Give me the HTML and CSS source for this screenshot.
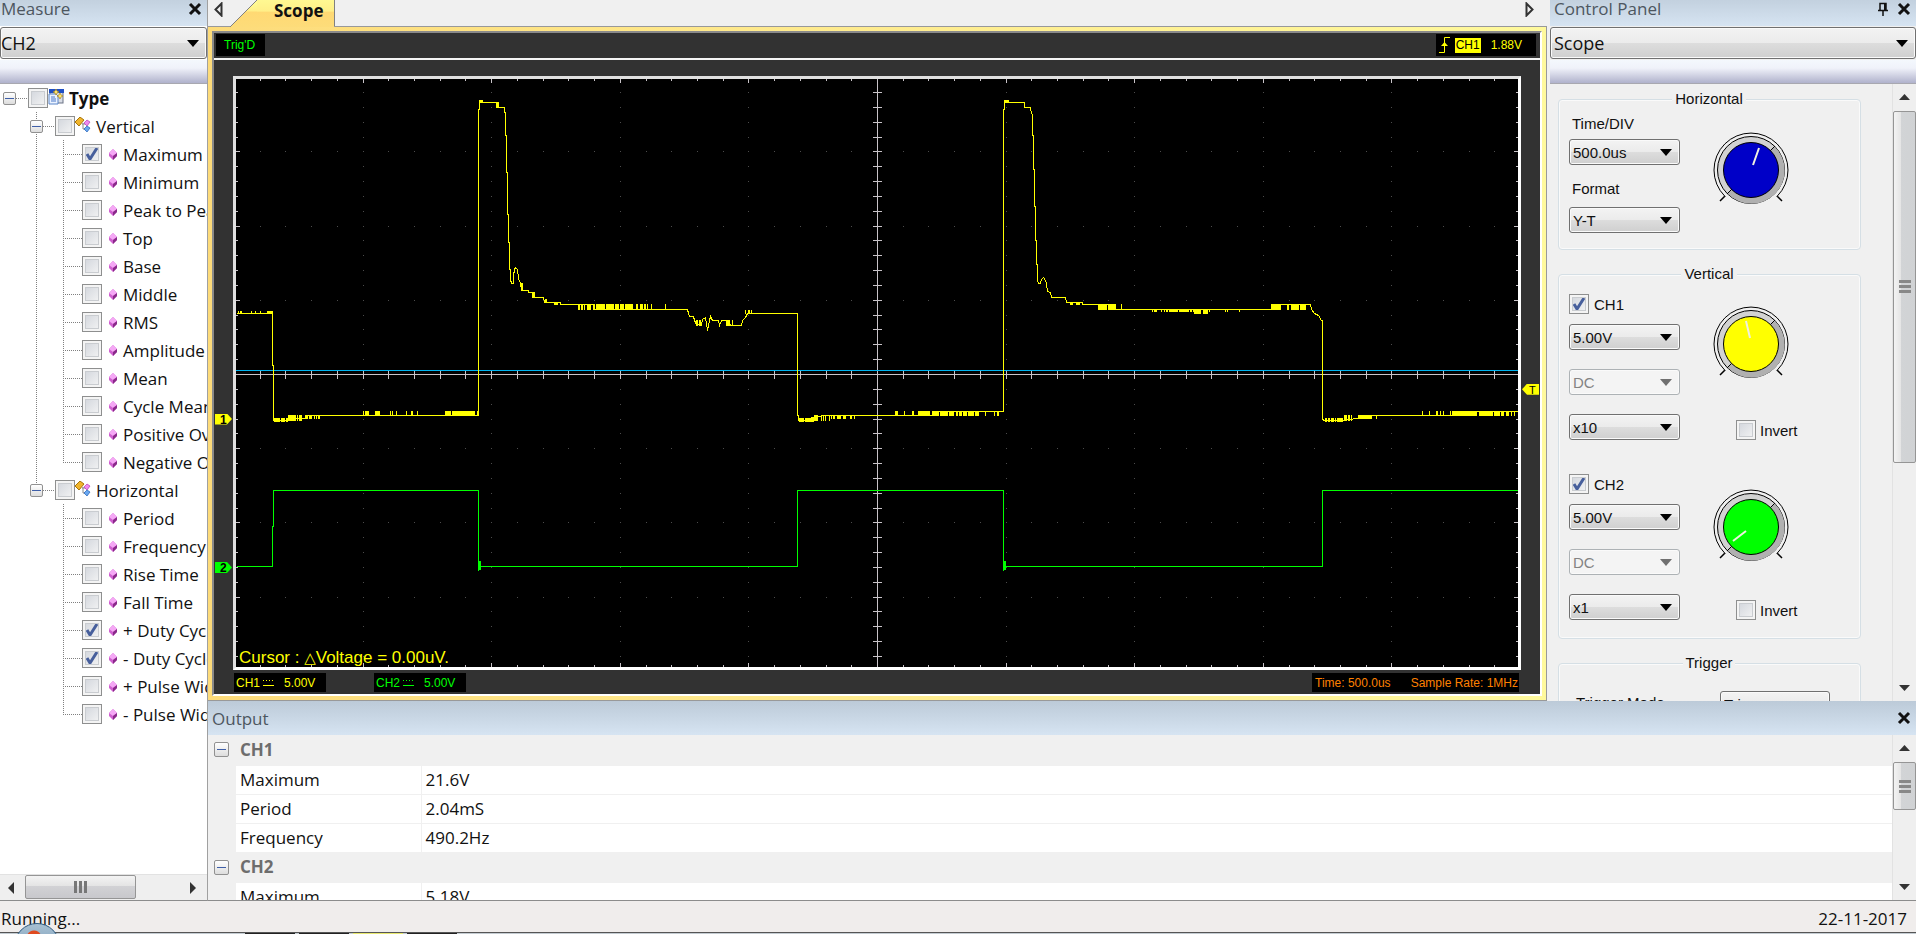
FILE: index.html
```
<!DOCTYPE html>
<html lang="en">
<head>
  <meta charset="UTF-8" />
  <meta name="viewport" content="width=device-width, initial-scale=1.0"/>
  <title>Scope</title>
  <link rel="stylesheet" href="styles.css">
</head>
<body>
  <div class="app">

    <!-- Measure panel -->
    <aside class="measure">
      <div class="panel-title cut">
        <h2>Measure</h2>
        <button class="icon-btn" aria-label="Close Measure"><svg width="14" height="14" viewBox="0 0 14 14"><path d="M2 2L12 12M12 2L2 12" class="cross"/></svg></button>
      </div>
      <select class="combo wide" aria-label="Measure channel">
        <option>CH1</option>
        <option selected>CH2</option>
      </select>
      <div class="strip"></div>

      <div class="tree">
        <div class="row root">
          <button class="expander" aria-label="Collapse Type"></button>
          <span class="dots"></span>
          <input type="checkbox" id="type">
          <svg class="tree-icon" width="16" height="16" viewBox="0 0 16 16">
            <rect x="2" y="1" width="13" height="13" fill="#d9dde6" stroke="#6b7385"/>
            <rect x="1" y="0" width="15" height="4" fill="#1f4fc4"/>
            <path d="M1 5h7l2 2v8H1z" fill="#eaf2ff" stroke="#5b86c9"/>
            <path d="M3 8h4M3 10h5M3 12h5" stroke="#4a78c8"/>
            <path d="M8 0l1 2 2 1-2 1-1 2-1-2-2-1 2-1zM12 4l1 2 2 1-2 1-1 2-1-2-2-1 2-1z" fill="#ffe66a" stroke="#a57a10" stroke-width=".6"/>
          </svg>
          <label for="type" class="bold">Type</label>
        </div>
        <ul class="groups" id="tree"></ul>
      </div>

      <div class="scroll-x">
        <button aria-label="Scroll left"><svg width="8" height="12" viewBox="0 0 8 12"><path d="M7 0v12L1 6z" fill="#333"/></svg></button>
        <div class="thumb"><i></i><i></i><i></i></div>
        <button aria-label="Scroll right"><svg width="8" height="12" viewBox="0 0 8 12"><path d="M1 0v12L7 6z" fill="#333"/></svg></button>
      </div>
    </aside>

    <!-- Scope -->
    <main class="scope">
      <div class="tabs">
        <button class="icon-btn" aria-label="Previous tab"><svg width="9" height="15" viewBox="0 0 9 15"><path d="M7.500 1.500v12L1.500 7.500z" class="hollow"/></svg></button>
        <button class="tab">
          <svg width="27" height="35" viewBox="0 0 27 35">
            <defs>
              <linearGradient id="tabFill" x1="0" y1="0" x2="0" y2="1">
                <stop offset="0" stop-color="#ffff99"/>
                <stop offset=".4" stop-color="#ffef88"/>
                <stop offset=".45" stop-color="#ffd973"/>
                <stop offset="1" stop-color="#fddc7a"/>
              </linearGradient>
            </defs>
            <path d="M0 35L27 8V35z" fill="url(#tabFill)"/>
            <path d="M0 35L27 8" stroke="#808080"/>
          </svg>
          <span>Scope</span>
        </button>
        <button class="icon-btn next" aria-label="Next tab"><svg width="9" height="15" viewBox="0 0 9 15"><path d="M1.500 1.500v12L7.500 7.500z" class="hollow"/></svg></button>
      </div>

      <div class="frame">
        <div class="screen">
          <div class="screen-top">
            <span class="chip trigd">Trig'D</span>
            <span class="chip level">
              <svg width="12" height="18" viewBox="0 0 12 18"><path d="M0 16.500H5.500V1.500H11" fill="none" stroke="#ff0"/><path d="M5.500 6L9 10H2z" fill="#ff0"/></svg>
              <b>CH1</b>
              <span>1.88V</span>
            </span>
          </div>

          <div class="plot-area">
            <div class="plot">
              <svg id="plot" viewBox="0 0 1282 588" preserveAspectRatio="none"></svg>
              <div class="cursor-text">Cursor : <span class="delta">△</span>Voltage = 0.00uV.</div>
            </div>
            <span class="marker ch1">1</span>
            <span class="marker ch2">2</span>
            <span class="marker trig">T</span>
          </div>

          <div class="screen-bottom">
            <span class="chip ch yellow">CH1 <svg width="11" height="8" viewBox="0 0 11 8"><path d="M0 .5h11" stroke-dasharray="1 2"/><path d="M0 5.500h11"/></svg><span>5.00V</span></span>
            <span class="chip ch green">CH2 <svg width="11" height="8" viewBox="0 0 11 8"><path d="M0 .5h11" stroke-dasharray="1 2"/><path d="M0 5.500h11"/></svg><span>5.00V</span></span>
            <span class="chip rate"><span>Time: 500.0us</span><span>Sample Rate: 1MHz</span></span>
          </div>
        </div>
      </div>
    </main>

    <!-- Control panel -->
    <aside class="control">
      <div class="panel-title cut">
        <h2>Control Panel</h2>
        <button class="icon-btn" aria-label="Pin"><svg width="12" height="14" viewBox="0 0 12 14"><path d="M3 8V1.500h6V8M1 8.500h10M6 9v5" fill="none" stroke="#111" stroke-width="1.500"/><path d="M7 1h2v7H7z" fill="#111"/></svg></button>
        <button class="icon-btn" aria-label="Close Control Panel"><svg width="14" height="14" viewBox="0 0 14 14"><path d="M2 2L12 12M12 2L2 12" class="cross"/></svg></button>
      </div>
      <select class="combo wide" aria-label="Panel">
        <option>Scope</option>
      </select>
      <div class="strip"></div>

      <div class="control-body">
        <div class="groups-col">
          <fieldset>
            <legend>Horizontal</legend>
            <div class="pair">
              <div class="fields timebase">
                <label for="timediv">Time/DIV</label>
                <select class="combo" id="timediv"><option>500.0us</option></select>
                <label for="format">Format</label>
                <select class="combo" id="format"><option>Y-T</option></select>
              </div>
              <div class="side top-pad">
                <svg class="knob" width="80" height="80" viewBox="-40 -40 80 80">
                  <use href="#knobRing"/>
                  <circle r="27.500" fill="#0000c8" stroke="#000"/>
                  <path d="M2 -5L8 -22" class="pointer"/>
                </svg>
              </div>
            </div>
          </fieldset>

          <fieldset>
            <legend>Vertical</legend>
            <div class="pair channel">
              <div class="fields">
                <span class="check"><input type="checkbox" id="ch1on" checked><label for="ch1on">CH1</label></span>
                <select class="combo" aria-label="CH1 volts per division"><option>5.00V</option></select>
                <select class="combo" aria-label="CH1 coupling" disabled><option>DC</option></select>
                <select class="combo" aria-label="CH1 probe"><option>x10</option></select>
              </div>
              <div class="side">
                <svg class="knob" width="80" height="80" viewBox="-40 -40 80 80">
                  <use href="#knobRing"/>
                  <circle r="27.500" fill="#ff0" stroke="#000"/>
                  <path d="M-5 -23L-1 -6" class="pointer"/>
                </svg>
                <span class="check invert"><input type="checkbox" id="inv1"><label for="inv1">Invert</label></span>
              </div>
            </div>
            <div class="pair channel second">
              <div class="fields">
                <span class="check"><input type="checkbox" id="ch2on" checked><label for="ch2on">CH2</label></span>
                <select class="combo" aria-label="CH2 volts per division"><option>5.00V</option></select>
                <select class="combo" aria-label="CH2 coupling" disabled><option>DC</option></select>
                <select class="combo" aria-label="CH2 probe"><option>x1</option></select>
              </div>
              <div class="side">
                <svg class="knob" width="80" height="80" viewBox="-40 -40 80 80">
                  <use href="#knobRing"/>
                  <circle r="27.500" fill="#0f0" stroke="#000"/>
                  <path d="M-18 14L-5 4" class="pointer"/>
                </svg>
                <span class="check invert"><input type="checkbox" id="inv2"><label for="inv2">Invert</label></span>
              </div>
            </div>
          </fieldset>

          <fieldset>
            <legend>Trigger</legend>
            <div class="trigger-row">
              <label for="trigmode">Trigger Mode</label>
              <select class="combo" id="trigmode"><option>Trigger</option></select>
            </div>
          </fieldset>
        </div>

        <div class="scroll-y">
          <button aria-label="Scroll up"><svg width="11" height="7" viewBox="0 0 11 7"><path d="M0 6h11L5.500 0z" fill="#333"/></svg></button>
          <div class="thumb tall"><i></i><i></i><i></i></div>
          <button aria-label="Scroll down"><svg width="11" height="7" viewBox="0 0 11 7"><path d="M0 1h11L5.500 7z" fill="#333"/></svg></button>
        </div>
      </div>
    </aside>

    <!-- Output -->
    <section class="output">
      <div class="panel-title">
        <h2>Output</h2>
        <button class="icon-btn" aria-label="Close Output"><svg width="14" height="14" viewBox="0 0 14 14"><path d="M2 2L12 12M12 2L2 12" class="cross"/></svg></button>
      </div>
      <div class="output-body">
        <div class="table-wrap">
          <table>
            <colgroup>
              <col class="col-gutter">
              <col class="col-name">
              <col>
            </colgroup>
            <tbody>
              <tr class="head"><td class="gutter"><button class="expander big" aria-label="Collapse CH1"></button></td><th colspan="2">CH1</th></tr>
              <tr><td class="gutter"></td><td class="name">Maximum</td><td>21.6V</td></tr>
              <tr><td class="gutter"></td><td class="name">Period</td><td>2.04mS</td></tr>
              <tr><td class="gutter"></td><td class="name">Frequency</td><td>490.2Hz</td></tr>
              <tr class="head"><td class="gutter"><button class="expander big" aria-label="Collapse CH2"></button></td><th colspan="2">CH2</th></tr>
              <tr><td class="gutter"></td><td class="name">Maximum</td><td>5.18V</td></tr>
            </tbody>
          </table>
        </div>
        <div class="scroll-y">
          <button aria-label="Scroll up"><svg width="11" height="7" viewBox="0 0 11 7"><path d="M0 6h11L5.500 0z" fill="#333"/></svg></button>
          <div class="thumb short"><i></i><i></i><i></i></div>
          <button aria-label="Scroll down"><svg width="11" height="7" viewBox="0 0 11 7"><path d="M0 1h11L5.500 7z" fill="#333"/></svg></button>
        </div>
      </div>
    </section>

    <footer class="status">
      <span>Running...</span>
      <span>22-11-2017</span>
    </footer>
    <div class="taskbar">
      <span class="orb"></span>
      <i></i><i></i><i class="active"></i><i></i>
    </div>
  </div>

  <!-- shared shapes -->
  <svg width="0" height="0" class="defs">
    <defs>
      <g id="knobRing">
        <path d="M-22 22L-31 31M22 22L31 31" stroke="#000" stroke-width="1.500"/>
        <path d="M-26.200 26.200A37 37 0 1 1 26.200 26.200" fill="#f0f0f0" stroke="#000"/>
        <circle r="33.500" fill="#d2d2d2" stroke="#000"/>
        <path d="M-23 24A33 33 0 0 0 24 -23L19 -20L-20 19z" fill="#b0b0b0"/>
        <path d="M-24 24L-18 18M24 -24L18 -18" stroke="#000"/>
      </g>
      <g id="groupIcon">
        <path d="M8 6v6h3M7 7h5" fill="none" stroke="#8a8a8a"/>
        <path d="M5 0l4 3-5 6-4-4z" fill="#f0b52c" stroke="#a87408"/>
        <path d="M12 3l3 2-3 4-3-3z" fill="#f08af0" stroke="#b03cb0" stroke-width=".7"/>
        <path d="M12 9l3 2-3 4-3-3z" fill="#6aa8f0" stroke="#1f5fb8" stroke-width=".7"/>
      </g>
      <g id="leafIcon">
        <path d="M4 0l4 4v3l-4 4-4-4V4z" fill="#d060d0"/>
        <path d="M4 0l4 4-4 3-4-3z" fill="#f5a8f5"/>
        <path d="M4 7l4-3v3l-4 4z" fill="#8a2a8a"/>
      </g>
    </defs>
  </svg>

  <script>
    // Measurement tree
    const groups = {
      Vertical: ["*Maximum", "Minimum", "Peak to Peak", "Top", "Base", "Middle", "RMS", "Amplitude", "Mean",
        "Cycle Mean", "Positive Overshoot", "Negative Overshoot"],
      Horizontal: ["Period", "Frequency", "Rise Time", "Fall Time", "*+ Duty Cycle", "*- Duty Cycle",
        "+ Pulse Width", "- Pulse Width"]
    };
    const tree = document.getElementById("tree");

    Object.keys(groups).forEach(name => {
      const leaves = groups[name].map((text, i) => {
        const on = text[0] === "*";
        const id = name + i;
        return `<li><div class="row leaf"><span class="dots"></span><input type="checkbox" id="${id}"${on ? " checked" : ""}>` +
          `<svg class="leaf-icon" width="8" height="11"><use href="#leafIcon"/></svg><label for="${id}">${on ? text.slice(1) : text}</label></div></li>`;
      }).join("");
      tree.innerHTML += `<li><div class="row group"><button class="expander" aria-label="Collapse ${name}"></button><span class="dots"></span>` +
        `<input type="checkbox" id="${name}"><svg class="tree-icon" width="16" height="16"><use href="#groupIcon"/></svg>` +
        `<label for="${name}">${name}</label></div><ul class="leaves">${leaves}</ul></li>`;
    });

    // Plot
    const W = 1282, H = 588, CX = 641, CY = 295, DX = 25.72, DY = 14.84;
    let dots = "", ticks = "";

    for (let i = -24; i <= 24; i++) {
      const x = Math.round(CX + i * DX);
      const len = i % 5 === 0 ? 4 : 2;
      ticks += `M${x} 0h1v${len}h-1zM${x} ${H - len}h1v${len}h-1zM${x} ${CY - 4}h1v9h-1z`;
      for (let j = -15; j <= 15; j += 5) dots += `M${x} ${Math.round(CY + j * DY)}h1v1h-1z`;
    }
    for (let j = -19; j <= 19; j++) {
      const y = Math.round(CY + j * DY);
      const len = j % 5 === 0 ? 4 : 2;
      ticks += `M0 ${y}h${len}v1h-${len}zM${W - len} ${y}h${len}v1h-${len}zM${CX - 4} ${y}h9v1h-9z`;
      for (let i = -20; i <= 20; i += 5) dots += `M${Math.round(CX + i * DX)} ${y}h1v1h-1z`;
    }
    ticks += `M0 ${CY}h${W}v1h-${W}zM${CX} 0h1v${H}h-1z`;

    // CH1 trace, [x, y] in plot pixels
    const ch1 = [
      [0,234],[36,234],[36,286],[37,286],[37,341],[50,341],[50,339],[70,339],[70,336],[242,336],[242,30],[243,30],[243,23],
      [260,23],[260,28],[268,28],[268,33],[269,33],[269,56],[270,56],[270,93],[271,93],[271,135],[272,135],[272,163],
      [273,163],[273,190],[274,190],[274,202],[275,202],[275,204],[277,204],[277,193],[278,193],[278,190],[279,188],[281,190],
      [282,199],[284,204],[285,211],[292,211],[292,213],[297,213],[297,218],[307,218],[308,223],[324,223],[324,225],[358,225],
      [358,230],[451,230],[452,234],[453,237],[457,237],[458,241],[460,245],[465,246],[466,240],[469,238],[471,251],[473,241],
      [474,237],[476,241],[482,241],[483,246],[485,241],[492,241],[494,246],[505,246],[506,241],[509,238],[511,234],[561,234],
      [561,336],[562,336],[562,341],[572,341],[572,339],[587,336],[640,336],[700,336],[700,332],[767,332],[767,30],[768,30],
      [768,23],[788,23],[788,28],[794,28],[795,34],[796,35],[796,56],[797,56],[797,90],[798,90],[798,127],[799,127],[799,161],
      [800,161],[800,185],[801,185],[801,201],[802,204],[804,204],[805,200],[807,198],[808,199],[810,204],[811,212],[814,213],
      [815,218],[829,218],[830,223],[846,223],[846,225],[875,225],[875,230],[1035,230],[1035,225],[1074,225],[1075,230],
      [1078,234],[1082,236],[1085,241],[1086,241],[1086,339],[1087,341],[1105,341],[1120,339],[1130,336],[1240,336],
      [1240,332],[1282,332]
    ];
    // noise bursts: [x from, x to, top, bottom, density]
    const noise = [
      [2,30,232,234,.3],[31,37,232,234,1],[243,248,21,23,.5],[260,263,23,28,1],
      [38,52,339,342,.8],[52,66,336,341,.7],[66,84,336,339,.4],[126,145,332,336,.6],[145,208,332,336,.12],
      [208,242,332,336,.85],[285,287,204,211,1],[296,299,213,218,1],[308,311,220,223,.6],[318,325,223,225,.5],
      [342,360,225,230,.5],[360,388,225,230,.92],[389,412,225,230,.8],[412,432,225,230,.2],
      [458,466,241,246,.7],[490,497,241,246,.5],[509,516,231,234,.4],
      [562,578,339,342,.8],[578,594,336,341,.6],[592,612,336,339,.8],[612,622,336,339,.2],
      [659,682,332,336,.4],[682,710,332,336,.8],[710,738,332,336,.85],[738,768,332,336,.3],[768,773,21,23,.7],
      [834,844,223,225,.4],[862,880,225,230,.8],[880,890,225,230,.4],[915,930,230,232,.5],[930,958,230,232,.9],
      [958,972,230,234,.7],[972,1005,230,232,.1],[1035,1045,225,230,1],[1048,1058,225,230,.5],[1058,1070,225,230,.95],
      [1088,1108,339,342,.6],[1108,1122,336,341,.6],[1122,1136,336,339,.9],[1136,1152,336,339,.2],
      [1184,1216,332,336,.3],[1216,1228,332,336,.7],[1228,1240,332,336,1],[1240,1268,332,336,.85],[1268,1282,332,336,.3]
    ];
    const ch2 = [[0,487],[36,487],[36,447],[37,447],[37,411],[242,411],[242,491],[242,487],[561,487],[561,411],
      [767,411],[767,491],[767,487],[1086,487],[1086,411],[1282,411]];

    let seed = 7;
    function random() {
      seed = (seed * 16807) % 2147483647;
      return seed / 2147483647;
    }
    let spikes = "";
    noise.forEach(([x0, x1, top, bottom, density]) => {
      for (let x = x0; x < x1; x++) {
        if (random() < density) spikes += `M${x} ${top}h1v${bottom - top + 1}h-1z`;
      }
    });

    const line = points => points.map(p => (p[0] + 0.5) + "," + (p[1] + 0.5)).join(" ");
    document.getElementById("plot").innerHTML =
      `<path d="${dots}" fill="#4c4c4c"/><path d="${ticks}" fill="#c8c3c8"/>` +
      `<path d="M0 291h${W}v1h-${W}z" fill="#00b4f0"/>` +
      `<polyline points="${line(ch2)}" class="trace green"/><path d="M242 482h3v9h-3zM767 482h3v9h-3z" fill="#0f0"/>` +
      `<polyline points="${line(ch1)}" class="trace yellow"/><path d="${spikes}" fill="#ff0"/>`;
  </script>
</body>
</html>
```
FILE: styles.css
```
* {
  box-sizing: border-box;
}
body {
  margin: 0;
  font-family: "Open Sans", "Noto Sans", sans-serif;
  font-size: 17px;
  color: #111;
  background: #f0f0f0;
}
button {
  padding: 0;
  border: none;
  background: none;
  font: inherit;
  color: inherit;
}
h2 {
  margin: 0;
  font-size: 17px;
  font-weight: normal;
  flex: 1;
}
svg {
  display: block;
}
.defs {
  position: absolute;
}
.app {
  display: grid;
  grid-template-columns: 208px minmax(0, 1fr) 369px;
  grid-template-rows: minmax(0, 1fr) 200px 31px 2px;
  height: 100vh;
  overflow: hidden;
}

/* panels */
.panel-title {
  display: flex;
  align-items: center;
  gap: 8px;
  height: 34px;
  flex: none;
  padding: 0 5px 0 4px;
  color: #4d565f;
  background: linear-gradient(#bccad8, #d6e4f2);
}
.panel-title.cut {
  height: 35px;
  margin-top: -9px;
}
.measure .panel-title {
  padding-left: 1px;
}
.icon-btn {
  display: flex;
  align-items: center;
}
.cross {
  stroke: #111;
  stroke-width: 3;
}
.hollow {
  fill: none;
  stroke: #333;
  stroke-width: 2;
}
.strip {
  height: 24px;
  flex: none;
  margin-top: 1px;
  background: linear-gradient(#f4f8fd, #f0f2fa 35%, #b0b2cc);
  border-bottom: 1px solid #a8a8b0;
}
.combo {
  appearance: none;
  display: block;
  width: 100%;
  height: 26px;
  padding: 0 24px 0 3px;
  border: 1px solid #707070;
  border-radius: 3px;
  font: 15px "Liberation Sans", Arial, sans-serif;
  color: #111;
  background:
    url("data:image/svg+xml,%3Csvg xmlns='http://www.w3.org/2000/svg' width='12' height='7'%3E%3Cpath d='M0 0h12L6 7z'/%3E%3C/svg%3E") right 7px center no-repeat,
    linear-gradient(#f3f3f3, #ebebeb 50%, #dddddd 50%, #cfcfcf);
  box-shadow: inset 0 0 0 1px #fafafa;
}
.combo:disabled {
  opacity: 1;
  color: #838383;
  border-color: #adb2b5;
  background:
    url("data:image/svg+xml,%3Csvg xmlns='http://www.w3.org/2000/svg' width='12' height='7'%3E%3Cpath d='M0 0h12L6 7z' fill='%23707070'/%3E%3C/svg%3E") right 7px center no-repeat,
    #f4f4f4;
}
.combo.wide {
  flex: none;
  height: 32px;
  margin-top: 1px;
  font: 18px "Open Sans", "Noto Sans", sans-serif;
}
.measure .combo {
  padding-left: 0;
}
input[type="checkbox"] {
  appearance: none;
  flex: none;
  width: 20px;
  height: 20px;
  margin: 0;
  border: 1px solid #8e8f8f;
  background: linear-gradient(135deg, #cfd3da, #f6f6f6);
  box-shadow: inset 0 0 0 2px #f4f4f4, inset 0 0 0 3px #c9ccd0;
}
input[type="checkbox"]:checked {
  background:
    url("data:image/svg+xml,%3Csvg xmlns='http://www.w3.org/2000/svg' width='14' height='14'%3E%3Cpath d='M2 7l3 5L12 1' fill='none' stroke='%23475f9c' stroke-width='3'/%3E%3C/svg%3E") center no-repeat,
    linear-gradient(135deg, #cfd3da, #f6f6f6);
}
.expander {
  flex: none;
  width: 13px;
  height: 13px;
  border: 1px solid #919191;
  border-radius: 2px;
  background: linear-gradient(#3f5fa8, #3f5fa8) center / 9px 1px no-repeat, linear-gradient(#fff, #ddd);
}
.expander.big {
  display: block;
  width: 15px;
  height: 15px;
}

/* scrollbars */
.scroll-x,
.scroll-y {
  display: flex;
  flex: none;
  background: #efefef;
}
.scroll-x {
  height: 26px;
  border-top: 1px solid #e2e2e2;
}
.scroll-y {
  flex-direction: column;
  width: 24px;
  border-left: 1px solid #e2e2e2;
}
.scroll-x button,
.scroll-y button {
  display: flex;
  align-items: center;
  justify-content: center;
  flex: none;
}
.scroll-x button {
  width: 25px;
  padding-right: 4px;
}
.scroll-y button {
  height: 27px;
}
.scroll-x button:last-child {
  margin-left: auto;
}
.scroll-y button:last-child {
  margin-top: auto;
}
.thumb {
  display: flex;
  align-items: center;
  justify-content: center;
  gap: 2px;
  border: 1px solid #959595;
  border-radius: 2px;
}
.scroll-x .thumb {
  width: 111px;
  margin-bottom: 1px;
  background: linear-gradient(#f3f3f3, #e4e4e4 45%, #d2d2d5 45%, #c8c8cc);
}
.scroll-y .thumb {
  flex-direction: column;
  background: linear-gradient(to right, #f3f3f3, #e4e4e4 35%, #d2d4d6 35%, #d0d2d4);
}
.scroll-x .thumb i {
  width: 3px;
  height: 12px;
  background: #777;
}
.scroll-y .thumb i {
  width: 12px;
  height: 3px;
  background: #888;
}
.thumb.tall {
  height: 57%;
}
.thumb.short {
  height: 48px;
}

/* measure */
.measure {
  grid-row: 1 / 3;
  display: flex;
  flex-direction: column;
  overflow: hidden;
  background: #fff;
  border-right: 1px solid #a0a0a0;
  border-bottom: 1px solid #8c8c8c;
}
.tree {
  flex: 1;
  overflow: hidden;
}
.tree ul {
  margin: 0;
  padding: 0;
  list-style: none;
}
.row {
  display: flex;
  align-items: center;
  height: 28px;
  white-space: nowrap;
}
.row.root {
  padding-left: 3px;
}
.row .dots {
  flex: none;
  width: 12px;
  height: 1px;
  background: repeating-linear-gradient(to right, #808080 0 1px, transparent 1px 2px);
}
.row.leaf .dots {
  width: 19px;
}
.tree .groups {
  margin-left: 36px;
}
.tree .leaves {
  margin-left: 27px;
}
.tree li {
  background: repeating-linear-gradient(#808080 0 1px, transparent 1px 2px) left top / 1px 100% no-repeat;
}
.tree li:last-child {
  background-size: 1px 14px;
}
.row.group {
  margin-left: -6px;
}
.tree-icon {
  flex: none;
  margin: 0 5px 2px 0;
}
.leaf-icon {
  flex: none;
  margin: 0 6px 0 7px;
}
.bold {
  font-weight: bold;
}

/* scope */
.scope {
  display: flex;
  flex-direction: column;
  min-width: 0;
}
.tabs {
  display: flex;
  flex: none;
  height: 35px;
  margin-top: -8px;
  padding: 0 13px 0 6px;
  border-bottom: 1px solid #999;
}
.tab {
  display: flex;
  margin-left: 7px;
  border-right: 1px solid #808080;
  font-weight: bold;
}
.tab span {
  height: 35px;
  padding: 0 11px 0 17px;
  line-height: 38px;
  background: linear-gradient(#ffff99, #ffef88 55%, #ffd973 57%, #fddc7a);
}
.next {
  margin-left: auto;
}
.frame {
  display: flex;
  flex: 1;
  min-height: 0;
  padding: 4px;
  background: linear-gradient(to right, #fddb7a, #ffe98c 40%, #fff99c);
  border-right: 1px solid #999;
  border-bottom: 1px solid #999;
}
.screen {
  display: flex;
  flex-direction: column;
  flex: 1;
  min-width: 0;
  border: 2px solid;
  border-color: #8a8a8a #fff #fff #8a8a8a;
  background: #323232;
  font: 12px "Liberation Sans", Arial, sans-serif;
}
.screen-top {
  display: flex;
  justify-content: space-between;
  height: 27px;
  flex: none;
  padding: 1px 4px 2px 2px;
  border-bottom: 2px solid #f4f4f4;
}
.chip {
  display: flex;
  align-items: center;
  background: #000;
}
.trigd {
  padding: 0 10px 0 8px;
  color: #0f0;
}
.level {
  gap: 4px;
  padding: 0 14px 0 3px;
  color: #ff0;
}
.level b {
  padding: 0 1px;
  font-weight: normal;
  line-height: 15px;
  color: #000;
  background: #ff0;
}
.level span {
  margin-left: 6px;
}
.plot-area {
  position: relative;
  display: flex;
  flex: 1;
  min-height: 0;
  margin: 16px 19px 0;
}
.plot {
  position: relative;
  flex: 1;
  background: #000;
  border: 3px solid;
  border-color: #e0e0e0 #fff #fff #e0e0e0;
}
.plot svg {
  width: 100%;
  height: 100%;
  shape-rendering: crispEdges;
}
.trace {
  fill: none;
  stroke-width: 1;
}
.trace.yellow {
  stroke: #ff0;
}
.trace.green {
  stroke: #0f0;
}
.cursor-text {
  position: absolute;
  left: 3px;
  bottom: 0;
  font-size: 17px;
  line-height: 18px;
  color: #ff0;
}
.delta {
  font: 15px "DejaVu Sans", sans-serif;
}
.marker {
  position: absolute;
  width: 17px;
  height: 11px;
  margin-top: -7px;
  line-height: 12px;
  color: #000;
  clip-path: polygon(0 0, 12px 0, 100% 50%, 12px 100%, 0 100%);
}
.marker.ch1,
.marker.ch2 {
  left: -18px;
  padding-left: 5px;
  font-weight: bold;
}
.marker.ch1 {
  top: 58%;
  background: #ff0;
}
.marker.ch2 {
  top: 83%;
  background: #0f0;
}
.marker.trig {
  top: 53%;
  right: -18px;
  padding-left: 7px;
  font-size: 11px;
  background: #ff0;
  clip-path: polygon(0 50%, 5px 0, 100% 0, 100% 100%, 5px 100%);
}
.screen-bottom {
  display: flex;
  flex: none;
  gap: 48px;
  margin: 3px 21px 2px 20px;
}
.ch {
  width: 92px;
  height: 19px;
  padding-left: 2px;
}
.ch svg {
  margin: 2px 10px 0 3px;
  fill: none;
  stroke: currentColor;
}
.ch.yellow {
  color: #ff0;
}
.ch.green {
  color: #0f0;
}
.rate {
  gap: 20px;
  margin-left: auto;
  padding: 0 1px 0 3px;
  color: #ff8000;
}

/* control panel */
.control {
  display: flex;
  flex-direction: column;
  min-height: 0;
  overflow: hidden;
  padding-left: 3px;
  font: 15px "Liberation Sans", Arial, sans-serif;
}
.control .panel-title {
  font-family: "Open Sans", "Noto Sans", sans-serif;
}
.control-body {
  display: flex;
  flex: 1;
  min-height: 0;
}
.groups-col {
  flex: 1;
  overflow: hidden;
  padding: 5px 31px 0 8px;
}
fieldset {
  margin: 0 0 14px;
  padding: 0 11px 0 10px;
  border: 1px solid #d5dfe5;
  border-radius: 4px;
  box-shadow: inset 0 0 0 1px #fafafa;
}
legend {
  margin: 0 auto;
  padding: 0 3px;
  line-height: 20px;
  background: #f0f0f0;
}
.pair {
  display: flex;
}
.fields {
  width: 111px;
}
.timebase {
  padding: 5px 0 16px;
}
.timebase label {
  display: block;
  height: 25px;
  padding-left: 3px;
  line-height: 20px;
}
.timebase .combo + label {
  height: 28px;
  margin-top: 14px;
}
.side {
  padding-left: 31px;
}
.side.top-pad {
  padding-top: 21px;
}
.check {
  display: flex;
  align-items: center;
  gap: 5px;
}
.invert {
  gap: 4px;
  margin: 36px 0 0 25px;
}
.channel {
  padding-top: 10px;
}
.channel .check + .combo {
  margin-top: 10px;
}
.channel .combo + .combo {
  margin-top: 19px;
}
.channel .side {
  padding-top: 10px;
}
.channel.second {
  padding: 34px 0 18px;
}
.channel.second .side {
  padding-top: 13px;
}
.channel.second .invert {
  margin-top: 33px;
}
.trigger-row {
  display: flex;
  align-items: flex-start;
  justify-content: space-between;
  padding: 18px 19px 18px 7px;
}
.trigger-row label {
  line-height: 24px;
}
.trigger-row .combo {
  width: 110px;
}
.pointer {
  stroke: #f0f0e0;
  stroke-width: 2;
}

/* output */
.output {
  grid-column: 2 / 4;
  display: flex;
  flex-direction: column;
  min-width: 0;
  overflow: hidden;
  border-bottom: 1px solid #8c8c8c;
}
.output-body {
  display: flex;
  flex: 1;
  min-height: 0;
}
.table-wrap {
  flex: 1;
  overflow: hidden;
}
table {
  width: 100%;
  border-collapse: collapse;
  table-layout: fixed;
  background: #fff;
}
.col-gutter {
  width: 28px;
}
.col-name {
  width: 185px;
}
td,
th {
  height: 29px;
  padding: 0 4px;
  border-bottom: 1px solid #f0f0f0;
  text-align: left;
  line-height: 24px;
}
td.gutter {
  padding: 0 6px;
  background: #f0f0f0;
}
td.name {
  border-right: 1px solid #f0f0f0;
}
.head th {
  height: 30px;
  color: #6d6d6d;
  background: #f0f0f0;
}

/* status bar */
.status {
  grid-column: 1 / 4;
  display: flex;
  align-items: center;
  justify-content: space-between;
  padding: 3px 9px 0 1px;
  background: #f0edec;
}
.taskbar {
  grid-column: 1 / 4;
  position: relative;
  display: flex;
  gap: 4px;
  padding-left: 245px;
  background: #c4ccd2;
  border-top: 1px solid #555;
}
.taskbar i {
  width: 50px;
  height: 1px;
  background: #222;
}
.taskbar i.active {
  background: #e8e870;
}
.orb {
  position: absolute;
  left: 14px;
  top: -10px;
  width: 46px;
  height: 46px;
  border: 1px solid #2d5a80;
  border-radius: 50%;
  background: radial-gradient(circle at 19px 14px, #e04a20 0 7px, transparent 8px), linear-gradient(#a8c0d2, #5f8aad);
}
```
